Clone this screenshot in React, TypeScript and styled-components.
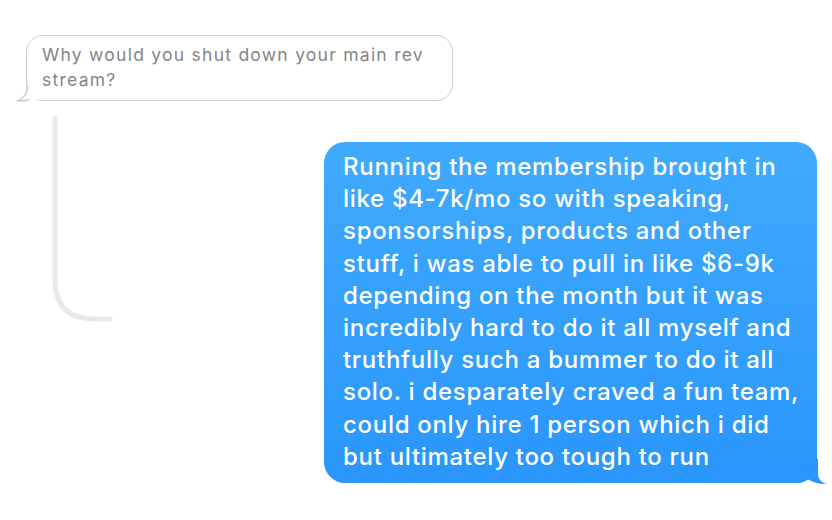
import React from "react";
import styled, { createGlobalStyle } from "styled-components";

const GlobalStyle = createGlobalStyle`
  html, body {
    margin: 0;
    padding: 0;
    background: #fff;
  }
  body {
    font-family: Inter, "Noto Sans", "Liberation Sans", sans-serif;
    -webkit-font-smoothing: antialiased;
  }
`;

const Thread = styled.div`
  width: 832px;
  height: 520px;
  box-sizing: border-box;
  padding: 35px 15px 0 18px;
  display: flex;
  flex-direction: column;
`;

const QuotedRow = styled.div`
  display: flex;
  padding-left: 8px;
`;

const QuotedBubble = styled.div`
  position: relative;
  width: 427px;
  box-sizing: border-box;
  padding: 6px 10px 8px 15px;
  border: 1.5px solid #cdcdcd;
  border-radius: 17px;
  color: #858585;
  font-size: 17.5px;
  letter-spacing: 1.25px;
  line-height: 25px;
  background: #fff;
`;

const QuotedTail = styled.svg`
  position: absolute;
  left: -10px;
  bottom: -3px;
  width: 24px;
  height: 20px;
  overflow: visible;
`;

const ReplyRow = styled.div`
  display: flex;
  align-items: flex-start;
`;

const Connector = styled.svg`
  flex: none;
  margin-top: 14px;
  margin-left: 31px;
  width: 70px;
  height: 210px;
`;

const Bubble = styled.div`
  position: relative;
  margin-left: auto;
  margin-top: 41px;
  width: 493px;
  box-sizing: border-box;
  padding: 9px 10px 10px 19px;
  border-radius: 21px;
  background: linear-gradient(180deg, #40aafc 0%, #2a96fb 100%);
  color: #fff;
  font-size: 24px;
  font-weight: 450;
  letter-spacing: 0.7px;
  line-height: 32.2px;
  white-space: nowrap;
`;

const BubbleTail = styled.svg`
  position: absolute;
  right: -11px;
  bottom: -2px;
  width: 32px;
  height: 26px;
`;

const reply = [
  "Running the membership brought in",
  "like $4-7k/mo so with speaking,",
  "sponsorships, products and other",
  "stuff, i was able to pull in like $6-9k",
  "depending on the month but it was",
  "incredibly hard to do it all myself and",
  "truthfully such a bummer to do it all",
  "solo. i desparately craved a fun team,",
  "could only hire 1 person which i did",
  "but ultimately too tough to run",
];

export default function App() {
  return (
    <>
      <GlobalStyle />
      <Thread>
        <QuotedRow>
          <QuotedBubble>
            Why would you shut down your main rev stream?
            <QuotedTail viewBox="0 0 24 20">
              <path
                d="M10.8 2 C 10.8 10, 8 15, 1 17.8 C 6 18.6, 11 17.4, 14.5 14.6"
                fill="#fff"
                stroke="#cdcdcd"
                strokeWidth="1.5"
              />
              <rect x="11.6" y="0" width="12" height="16.3" fill="#fff" />
            </QuotedTail>
          </QuotedBubble>
        </QuotedRow>
        <ReplyRow>
          <Connector viewBox="0 0 70 210">
            <path
              d="M6 3 V 165 Q 6 204, 45 204 H 61"
              fill="none"
              stroke="#e9e9e9"
              strokeWidth="5"
              strokeLinecap="round"
            />
          </Connector>
          <Bubble>
            {reply.map((line, i) => (
              <React.Fragment key={i}>
                {line}
                {i < reply.length - 1 && <br />}
              </React.Fragment>
            ))}
            <BubbleTail viewBox="0 0 32 26">
              <path
                d="M22 0 V 15 C 22 20, 26 24, 31 25 C 24 25.5, 17 23, 12 20.5 C 9 23, 5 24, 0 24 V 0 Z"
                fill="#2a96fb"
              />
            </BubbleTail>
          </Bubble>
        </ReplyRow>
      </Thread>
    </>
  );
}
